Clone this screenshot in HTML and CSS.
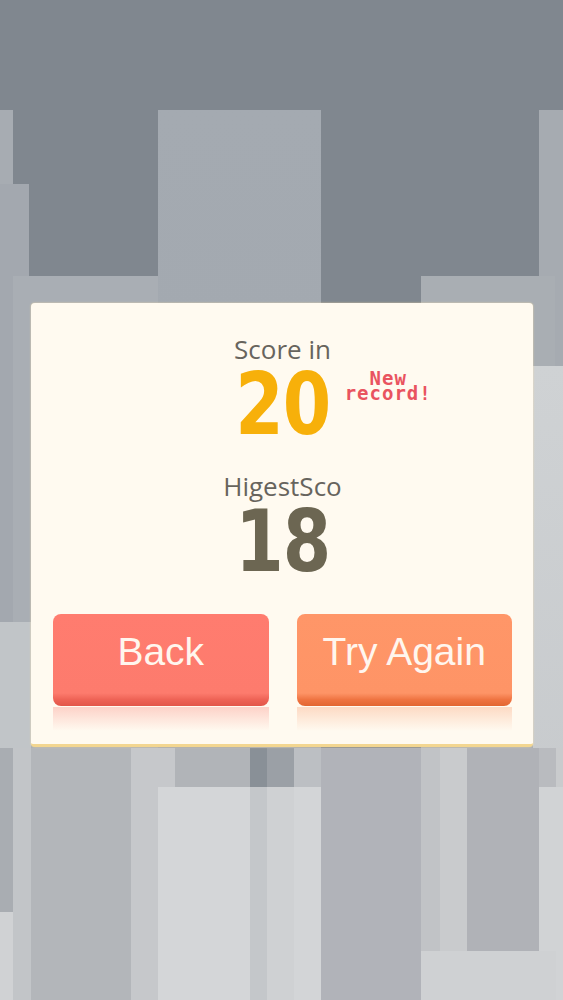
FILE: index.html
```html
<!DOCTYPE html>
<html lang="en">
<head>
    <meta charset="UTF-8">
    <meta name="viewport" content="width=device-width, initial-scale=1.0">
    <title>Game Over</title>
    <link rel="stylesheet" href="styles.css">
</head>
<body>
    <div class="scene">
        <div class="pillar p-a"></div>
        <div class="pillar p-b"></div>
        <div class="pillar p-c"></div>
        <div class="pillar p-d"></div>
        <div class="pillar p-e"></div>
        <div class="pillar p-f"></div>
        <div class="pillar p-g"></div>
        <div class="pillar p-h"></div>
        <div class="floor"></div>
        <div class="pillar front f-1"></div>
        <div class="pillar front f-2"></div>
        <div class="pillar front f-3"></div>
        <div class="pillar front f-4"></div>
    </div>

    <div class="result-panel">
        <div class="score-block">
            <div class="score-label">Score in</div>
            <div class="score-row">
                <span class="score-value current">20</span>
                <span class="new-record">New<br>record!</span>
            </div>
        </div>
        <div class="score-block best">
            <div class="score-label">HigestSco</div>
            <div class="score-row">
                <span class="score-value highest">18</span>
            </div>
        </div>
        <div class="panel-buttons">
            <button class="btn btn-back">Back</button>
            <button class="btn btn-retry">Try Again</button>
        </div>
    </div>
</body>
</html>
```

FILE: styles.css
```css
body {
    margin: 0;
    height: 1000px;
    overflow: hidden;
    position: relative;
    background-color: #80878f;
    font-family: "Open Sans", "Noto Sans", sans-serif;
}

/* background city of pillars */
.scene {
    position: absolute;
    inset: 0;
    overflow: hidden;
}

.pillar {
    position: absolute;
    bottom: 0;
    background-color: #a5aab1;
}

.p-a { left: 0; top: 110px; width: 13px; background-color: #a7acb2; }
.p-b { left: 0; top: 184px; width: 29px; background-color: #a3a8af; }
.p-c { left: 13px; top: 276px; width: 162px; background-color: #a9aeb4; }
.p-d { left: 158px; top: 110px; width: 163px; background: linear-gradient(#a4aab1, #a0a6ad); }
.p-e { left: 539px; top: 110px; width: 24px; background-color: #a6abb1; }
.p-f { left: 421px; top: 276px; width: 134px; background-color: #a9aeb3; }
.p-g { left: 0; top: 622px; width: 31px; background-color: #c1c5c8; }
.p-h { left: 533px; top: 366px; width: 30px; background: linear-gradient(#cfd2d4, #c4c7ca); }

.floor {
    position: absolute;
    left: 0;
    right: 0;
    top: 748px;
    bottom: 0;
    background: linear-gradient(90deg,
        #a9adb2 0 13px, #c2c5c8 13px 31px, #b3b6ba 31px 131px,
        #c6c8cb 131px 175px, #b1b4b8 175px 250px, #899097 250px 267px,
        #9ba0a6 267px 294px, #bcbfc3 294px 321px, #b1b3b9 321px 421px,
        #c1c3c6 421px 440px, #c9cbcd 440px 467px, #b0b2b7 467px 539px,
        #b9bbbf 539px 556px, #c9cbcd 556px);
}

.f-1 {
    left: 158px; top: 787px; width: 163px;
    background: linear-gradient(90deg,
        #d4d6d8 0 92px, #c4c7ca 92px 109px, #cfd1d3 109px 136px, #d3d5d7 136px);
}
.f-2 { left: 539px; top: 787px; width: 24px; background-color: #d1d3d5; }
.f-3 { left: 0; top: 912px; width: 13px; background-color: #d0d2d4; }
.f-4 { left: 421px; top: 951px; width: 135px; background-color: #cfd1d3; }

/* result dialog */
.result-panel {
    position: relative;
    margin: 303px 30px 0 31px;
    height: 441px;
    box-sizing: content-box;
    padding: 0 21px 0 22px;
    display: flex;
    flex-direction: column;
    background-color: #fffaf0;
    border-radius: 4px;
    border-bottom: 3px solid #f3d690;
    box-shadow: 0 0 2px rgba(255, 230, 170, 0.8);
}

.score-block {
    display: flex;
    flex-direction: column;
    align-items: center;
    margin-top: 32px;
}

.score-block.best {
    margin-top: 32px;
}

.score-label {
    font-size: 26px;
    line-height: 28px;
    color: #67645d;
}

.score-row {
    position: relative;
    height: 72px;
    margin-top: 5px;
    display: flex;
    align-items: center;
}

.score-value {
    font-family: "DejaVu Sans", sans-serif;
    font-weight: bold;
    font-stretch: condensed;
    font-size: 86px;
    line-height: 72px;
    letter-spacing: -1px;
    transform: scaleX(0.9);
}

.score-value.current {
    color: #f7b00a;
}

.score-value.highest {
    color: #6c6652;
}

.new-record {
    position: absolute;
    left: 115px;
    top: 3px;
    font-family: "DejaVu Sans Mono", monospace;
    font-weight: bold;
    font-size: 19px;
    line-height: 15px;
    letter-spacing: 1px;
    text-align: center;
    color: #e9535f;
    white-space: nowrap;
}

.panel-buttons {
    display: flex;
    gap: 28px;
    margin-top: 37px;
}

.btn {
    position: relative;
    flex: 1;
    height: 92px;
    padding: 0 0 16px;
    border: none;
    border-radius: 8px;
    font-family: "Liberation Sans", Arial, sans-serif;
    font-size: 39px;
    color: #fff6ee;
    cursor: pointer;
}

/* soft reflection under each button */
.btn::after {
    content: "";
    position: absolute;
    left: 0;
    right: 0;
    top: 93px;
    height: 24px;
    pointer-events: none;
}

.btn-back {
    background: linear-gradient(#ff7c6f 0, #fd7b6d 86%, #ee6356 93%, #e25649 100%);
}

.btn-back::after {
    background: linear-gradient(rgba(250, 150, 140, 0.4), rgba(255, 250, 240, 0));
}

.btn-retry {
    background: linear-gradient(#ff9668 0, #fe9466 86%, #ef7442 93%, #e26632 100%);
}

.btn-retry::after {
    background: linear-gradient(rgba(250, 170, 130, 0.4), rgba(255, 250, 240, 0));
}
```
